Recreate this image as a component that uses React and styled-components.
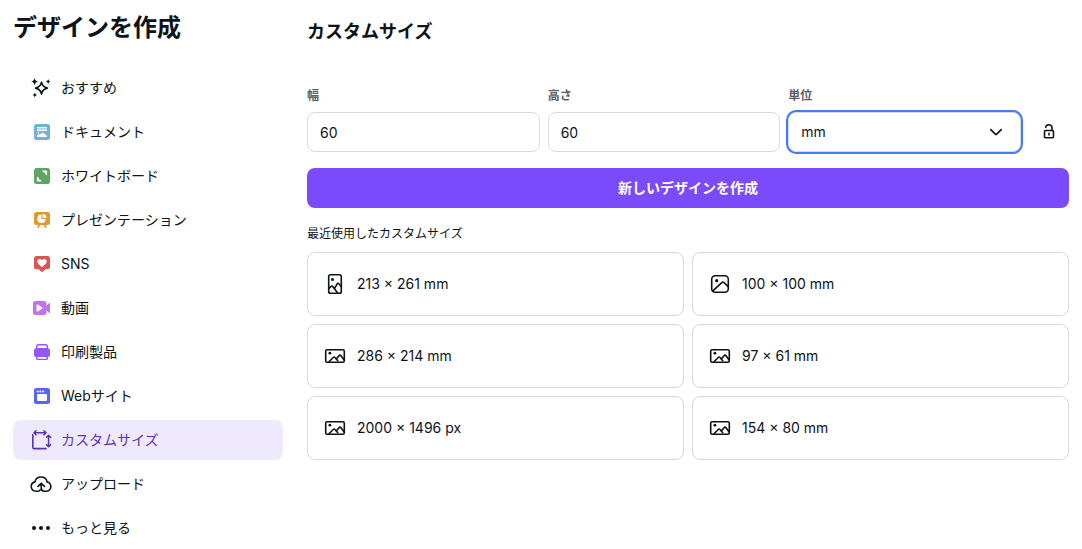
import React, { useState } from 'react';
import styled, { createGlobalStyle } from 'styled-components';

const GlobalStyle = createGlobalStyle`
  *, *::before, *::after {
    box-sizing: border-box;
  }

  body {
    margin: 0;
    background: #fff;
    color: #0e1318;
    font-family: Inter, "Noto Sans CJK JP", sans-serif;
    font-size: 14px;
    line-height: 20px;
  }

  button, input, select {
    font: inherit;
    color: inherit;
  }
`;

const Page = styled.div`
  display: grid;
  grid-template-columns: 270px minmax(0, 1fr);
  column-gap: 24px;
  padding: 12px 13px 0;
`;

const Title = styled.h1`
  margin: 0 0 24px;
  font-size: 24px;
  line-height: 32px;
  font-weight: 600;
`;

const NavList = styled.ul`
  display: flex;
  flex-direction: column;
  gap: 4px;
  margin: 0;
  padding: 0;
  list-style: none;
`;

const NavLink = styled.a`
  display: flex;
  align-items: center;
  gap: 8px;
  height: 40px;
  padding: 0 16px;
  border-radius: 8px;
  color: ${props => (props.$active ? '#5a32b8' : 'inherit')};
  background: ${props => (props.$active ? '#efe9fe' : 'transparent')};
  text-decoration: none;

  &:hover {
    background: ${props => (props.$active ? '#efe9fe' : '#f4f5f7')};
  }
`;

const Icon = styled.svg`
  flex: none;
  width: 24px;
  height: 24px;
  fill: none;
`;

const SectionTitle = styled.h2`
  margin: 8px 0 44px;
  font-size: 18px;
  line-height: 24px;
  font-weight: 600;
`;

const SizeForm = styled.form`
  display: grid;
  grid-template-columns: repeat(3, minmax(0, 1fr)) 40px;
  gap: 16px 8px;
  align-items: end;
`;

const Field = styled.div`
  display: flex;
  flex-direction: column;
  gap: 8px;
`;

const Label = styled.label`
  color: #5a5e64;
  font-size: 12px;
  line-height: 16px;
  font-weight: 600;
`;

const TextInput = styled.input`
  width: 100%;
  height: 40px;
  padding: 0 12px;
  border: 1px solid #d8d9de;
  border-radius: 8px;
  background: #fff;
  outline: none;

  &:focus {
    box-shadow: 0 0 0 2px #447bf5;
  }
`;

const SelectBox = styled.div`
  display: grid;
  align-items: center;

  > * {
    grid-area: 1 / 1;
  }

  > svg {
    justify-self: end;
    margin-right: 13px;
    pointer-events: none;
  }
`;

const Select = styled.select`
  appearance: none;
  width: 100%;
  height: 40px;
  padding: 0 40px 0 12px;
  border: 1px solid #d8d9de;
  border-radius: 8px;
  background: #fff;
  outline: none;
  box-shadow: 0 0 0 2px #447bf5;
`;

const IconButton = styled.button`
  display: flex;
  align-items: center;
  justify-content: center;
  width: 40px;
  height: 40px;
  padding: 0;
  border: none;
  border-radius: 8px;
  background: transparent;
  cursor: pointer;
`;

const SubmitButton = styled.button`
  grid-column: 1 / -1;
  height: 40px;
  border: none;
  border-radius: 8px;
  background: #7b4afb;
  color: #fff;
  font-weight: 600;
  cursor: pointer;
`;

const RecentTitle = styled.h3`
  margin: 16px 0 8px;
  font-size: 12px;
  line-height: 20px;
  font-weight: 400;
`;

const RecentGrid = styled.div`
  display: grid;
  grid-template-columns: repeat(2, minmax(0, 1fr));
  gap: 8px;
`;

const SizeCard = styled.button`
  display: flex;
  align-items: center;
  gap: 10px;
  height: 64px;
  padding: 0 15px;
  border: 1px solid #d8d9de;
  border-radius: 8px;
  background: #fff;
  text-align: left;
  cursor: pointer;
`;

const line = {
  stroke: 'currentColor',
  strokeWidth: 1.6,
  strokeLinecap: 'round',
  strokeLinejoin: 'round',
};

const SparkleIcon = () => (
  <>
    <path {...line} d="M12.5 6.2c.7 3.6 2.3 5.2 5.9 5.9-3.6.7-5.2 2.3-5.9 5.9-.7-3.6-2.3-5.2-5.9-5.9 3.6-.7 5.2-2.3 5.9-5.9z" />
    <path fill="currentColor" d="M5.6 2c.5 2.2 1.4 3.1 3.6 3.6-2.2.5-3.1 1.4-3.6 3.6-.5-2.2-1.4-3.1-3.6-3.6C4.2 5.1 5.1 4.2 5.6 2z" />
    <path fill="currentColor" d="M19.2 3c.4 1.6 1 2.2 2.6 2.6-1.6.4-2.2 1-2.6 2.6-.4-1.6-1-2.2-2.6-2.6 1.6-.4 2.2-1 2.6-2.6z" />
    <path fill="currentColor" d="M5.8 16.4c.4 1.6 1 2.2 2.6 2.6-1.6.4-2.2 1-2.6 2.6-.4-1.6-1-2.2-2.6-2.6 1.6-.4 2.2-1 2.6-2.6z" />
  </>
);

const DocumentIcon = () => (
  <>
    <rect x="5" y="4" width="16" height="16" rx="2.5" fill="#6bb5d2" />
    <path fill="#fff" d="M8 7h10v1.500H8zM8 9.500h10V11H8zM8 17v-1.500l1.600-1.500 1.200.8 2.800-2.600 4.400 3.600V17z" />
    <circle cx="9.300" cy="12.700" r=".8" fill="#fff" />
  </>
);

const WhiteboardIcon = () => (
  <>
    <rect x="5" y="4" width="16" height="16" rx="2.5" fill="#5fa461" />
    <path fill="#fff" d="M13.500 6.500h3.300c.8 0 1.300.5 1.300 1.300v3.400c-1.200 0-1.900-.6-1.900-1.600V8.400H15c-.9 0-1.500-.7-1.500-1.900zM7.900 12.800c1.200 0 1.900.6 1.900 1.600v1.200H11c.9 0 1.500.7 1.500 1.900H9.200c-.8 0-1.300-.5-1.300-1.300z" />
  </>
);

const PresentationIcon = () => (
  <>
    <rect x="5" y="4" width="16" height="13" rx="2.5" fill="#e2992b" />
    <path stroke="#e2992b" strokeWidth="2" strokeLinecap="round" d="M10.300 16.500L9.300 19M15.700 16.500l1 2.500" />
    <path fill="#fff" d="M12.400 6.600v4.300h4.300a4.200 4.200 0 1 1-4.300-4.300z" />
    <path fill="#fff" d="M13.500 5.900a4 4 0 0 1 4 4h-4z" />
  </>
);

const SocialIcon = () => (
  <>
    <path fill="#dc5651" d="M7.500 4h11A2.500 2.500 0 0 1 21 6.500v8.200a2.500 2.500 0 0 1-2.500 2.500h-2.200L13 20.300l-3.300-3.100H7.500A2.500 2.500 0 0 1 5 14.700V6.500A2.500 2.500 0 0 1 7.500 4z" />
    <path fill="#fff" d="M13 8.100c1-1.400 2.800-1.500 3.900-.5 1.200 1.200 1 2.900-.1 4.100L13 15.200l-3.800-3.500C8.100 10.500 7.900 8.800 9.100 7.600c1.100-1 2.900-.9 3.900.5z" />
  </>
);

const VideoIcon = () => (
  <>
    <rect x="4" y="5" width="13.500" height="14" rx="2.500" fill="#c572ea" />
    <path fill="#c572ea" d="M17 10l3-2.700c.5-.4 1-.2 1 .4v8.600c0 .6-.5.800-1 .4L17 14z" />
    <path fill="#fff" d="M7.500 9.300c0-.8.6-1.100 1.200-.7l4.400 2.700c.6.400.6 1 0 1.400l-4.400 2.700c-.6.400-1.200.1-1.200-.7z" />
  </>
);

const PrintIcon = () => (
  <>
    <path fill="#9457f8" d="M9.500 4h7A2.500 2.500 0 0 1 19 6.500v1.700a2 2 0 0 1 2 2V15a2 2 0 0 1-2 2v1.500a1.500 1.500 0 0 1-1.500 1.500h-9A1.500 1.500 0 0 1 7 18.500V17a2 2 0 0 1-2-2v-4.800a2 2 0 0 1 2-2V6.500A2.500 2.500 0 0 1 9.500 4z" />
    <path fill="#fff" d="M9.700 5.400h6.600c.7 0 1.300.6 1.300 1.300V8H8.400V6.700c0-.7.6-1.300 1.300-1.300zM8.400 17h9.200v1.200c0 .3-.2.500-.5.500H8.900c-.3 0-.5-.2-.5-.5z" />
  </>
);

const WebIcon = () => (
  <>
    <rect x="5" y="4" width="16" height="16" rx="2.5" fill="#5964f6" />
    <rect x="8" y="10" width="10" height="7" rx="1" fill="#fff" />
    <circle cx="8.700" cy="7.500" r="1" fill="#fff" />
    <circle cx="11.400" cy="7.500" r="1" fill="#fff" />
    <circle cx="14.100" cy="7.500" r="1" fill="#fff" />
  </>
);

const CustomSizeIcon = () => (
  <path {...line} d="M3.800 6.800v12.400c0 .9.500 1.400 1.400 1.400H17M5.200 4.800h11.600M7 2.800l-2 2 2 2M15 2.800l2 2-2 2M19.600 7.400v11.200M17.600 9.300l2-2 2 2M17.600 16.700l2 2 2-2" />
);

const UploadIcon = () => (
  <path {...line} d="M8.300 19.200H7A4.700 4.700 0 0 1 6 9.900a6.200 6.200 0 0 1 12.100 0 4.700 4.700 0 0 1-1.100 9.300h-1.500c-2 0-3.300-1.200-3.300-3.200v-4.200M9 14.400l3.200-3.200 3.200 3.200M8.300 19.200c1.300 0 2.200-.4 2.800-1.200" />
);

const MoreIcon = () => (
  <>
    <circle cx="5" cy="12" r="2" fill="currentColor" />
    <circle cx="12" cy="12" r="2" fill="currentColor" />
    <circle cx="19" cy="12" r="2" fill="currentColor" />
  </>
);

const sizeIcons = {
  portrait: (
    <>
      <rect {...line} x="5.700" y="2.700" width="12.600" height="18.600" rx="1.800" />
      <path {...line} d="M6 16.400l2.200-2c.5-.5 1.100-.4 1.500.1l5 6.500M11.600 16.400l2.600-4.500c.4-.7 1.100-.8 1.600-.2l2.300 2.700" />
      <circle cx="9.500" cy="7.400" r="1.500" fill="currentColor" />
    </>
  ),
  square: (
    <>
      <rect {...line} x="3.700" y="3.700" width="16.600" height="16.600" rx="3.500" />
      <path {...line} d="M4.600 19.200l9.200-8.600c.7-.7 1.500-.7 2.200 0l4.200 4" />
      <circle cx="8.700" cy="8.700" r="1.600" fill="currentColor" />
    </>
  ),
  landscape: (
    <>
      <rect {...line} x="2.700" y="5.700" width="18.600" height="12.600" rx="1.500" />
      <path {...line} d="M6 17.800l4.200-4.300c.6-.6 1.200-.6 1.800 0l2.800 3.200M13.200 15.200l2.800-3.500c.6-.8 1.400-.8 2 0l3 4" />
      <circle cx="6.900" cy="9.200" r="1.400" fill="currentColor" />
    </>
  ),
};

const navItems = [
  { label: 'おすすめ', icon: SparkleIcon },
  { label: 'ドキュメント', icon: DocumentIcon },
  { label: 'ホワイトボード', icon: WhiteboardIcon },
  { label: 'プレゼンテーション', icon: PresentationIcon },
  { label: 'SNS', icon: SocialIcon },
  { label: '動画', icon: VideoIcon },
  { label: '印刷製品', icon: PrintIcon },
  { label: 'Webサイト', icon: WebIcon },
  { label: 'カスタムサイズ', icon: CustomSizeIcon },
  { label: 'アップロード', icon: UploadIcon },
  { label: 'もっと見る', icon: MoreIcon },
];

const recentSizes = [
  { label: '213 × 261 mm', shape: 'portrait' },
  { label: '100 × 100 mm', shape: 'square' },
  { label: '286 × 214 mm', shape: 'landscape' },
  { label: '97 × 61 mm', shape: 'landscape' },
  { label: '2000 × 1496 px', shape: 'landscape' },
  { label: '154 × 80 mm', shape: 'landscape' },
];

const Sidebar = ({ active, onSelect }) => (
  <nav>
    <Title>デザインを作成</Title>
    <NavList>
      {navItems.map(({ label, icon: Glyph }) => (
        <li key={label}>
          <NavLink
            href="#"
            $active={label === active}
            aria-current={label === active ? 'page' : undefined}
            onClick={(e) => {
              e.preventDefault();
              onSelect(label);
            }}
          >
            <Icon viewBox="0 0 24 24" aria-hidden="true">
              <Glyph />
            </Icon>
            {label}
          </NavLink>
        </li>
      ))}
    </NavList>
  </nav>
);

const App = () => {
  const [active, setActive] = useState('カスタムサイズ');
  const [width, setWidth] = useState('60');
  const [height, setHeight] = useState('60');
  const [unit, setUnit] = useState('mm');

  return (
    <>
      <GlobalStyle />
      <Page>
        <Sidebar active={active} onSelect={setActive} />
        <main>
          <SectionTitle>カスタムサイズ</SectionTitle>
          <SizeForm onSubmit={(e) => e.preventDefault()}>
            <Field>
              <Label htmlFor="width">幅</Label>
              <TextInput
                id="width"
                inputMode="numeric"
                value={width}
                onChange={(e) => setWidth(e.target.value)}
              />
            </Field>
            <Field>
              <Label htmlFor="height">高さ</Label>
              <TextInput
                id="height"
                inputMode="numeric"
                value={height}
                onChange={(e) => setHeight(e.target.value)}
              />
            </Field>
            <Field>
              <Label htmlFor="unit">単位</Label>
              <SelectBox>
                <Select id="unit" value={unit} onChange={(e) => setUnit(e.target.value)}>
                  <option value="px">px</option>
                  <option value="in">in</option>
                  <option value="mm">mm</option>
                  <option value="cm">cm</option>
                </Select>
                <Icon viewBox="0 0 24 24" aria-hidden="true">
                  <path {...line} d="M6.800 9.600l4.500 4.500c.5.500.9.500 1.400 0l4.500-4.500" />
                </Icon>
              </SelectBox>
            </Field>
            <IconButton type="button" aria-label="縦横比を固定">
              <Icon viewBox="0 0 24 24" aria-hidden="true">
                <rect {...line} x="7.500" y="10.500" width="9" height="7.200" rx="1" />
                <path {...line} d="M8.700 7.200A3.200 3.200 0 0 1 15 8v2.500M12 13.300v1.600" />
              </Icon>
            </IconButton>
            <SubmitButton type="submit">新しいデザインを作成</SubmitButton>
          </SizeForm>

          <RecentTitle>最近使用したカスタムサイズ</RecentTitle>
          <RecentGrid>
            {recentSizes.map(({ label, shape }) => (
              <SizeCard key={label} type="button">
                <Icon viewBox="0 0 24 24" aria-hidden="true">
                  {sizeIcons[shape]}
                </Icon>
                {label}
              </SizeCard>
            ))}
          </RecentGrid>
        </main>
      </Page>
    </>
  );
};

export default App;
